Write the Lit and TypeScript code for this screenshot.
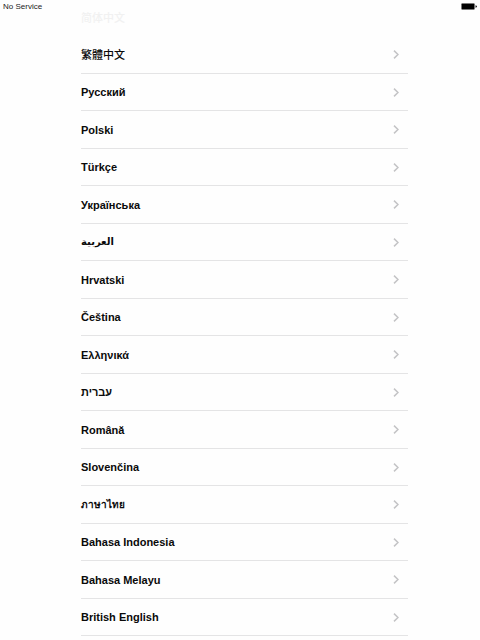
import { LitElement, html, css } from "lit";
import { customElement, property } from "lit/decorators.js";

interface Language {
  code: string;
  name: string;
}

const LANGUAGES: Language[] = [
  { code: "zh-Hant", name: "繁體中文" },
  { code: "ru", name: "Русский" },
  { code: "pl", name: "Polski" },
  { code: "tr", name: "Türkçe" },
  { code: "uk", name: "Українська" },
  { code: "ar", name: "العربية" },
  { code: "hr", name: "Hrvatski" },
  { code: "cs", name: "Čeština" },
  { code: "el", name: "Ελληνικά" },
  { code: "he", name: "עברית" },
  { code: "ro", name: "Română" },
  { code: "sk", name: "Slovenčina" },
  { code: "th", name: "ภาษาไทย" },
  { code: "id", name: "Bahasa Indonesia" },
  { code: "ms", name: "Bahasa Melayu" },
  { code: "en-GB", name: "British English" },
];

@customElement("status-bar")
export class StatusBar extends LitElement {
  static styles = css`
    :host {
      display: flex;
      align-items: center;
      justify-content: space-between;
      height: 13px;
      padding: 0 3px;
      font-size: 8px;
      line-height: 13px;
      color: #222;
    }
    .battery {
      display: block;
      width: 16px;
      height: 7px;
    }
  `;

  render() {
    return html`
      <span>No Service</span>
      <svg class="battery" viewBox="0 0 16 7" role="img" aria-label="Battery full">
        <rect x="0.5" y="0.5" width="13" height="6" rx="0.8" fill="#000" stroke="#777" stroke-width="0.6" />
        <path d="M14.5 2.2 Q16 2.4 16 3.5 Q16 4.6 14.5 4.8 Z" fill="#111" />
      </svg>
    `;
  }
}

@customElement("language-row")
export class LanguageRow extends LitElement {
  @property({ attribute: false }) language!: Language;

  static styles = css`
    :host {
      display: flex;
      height: 100%;
    }
    .row {
      flex: 1;
      display: flex;
      align-items: center;
      justify-content: space-between;
      margin: 0;
      padding: 0 9px 0 0;
      border: 0;
      background: none;
      color: #0a0a0a;
      font: inherit;
      text-align: left;
      cursor: pointer;
    }
    .name:lang(ar),
    .name:lang(th) {
      font-size: 10px;
    }
    .name:lang(zh) {
      font-weight: 500;
    }
    .chevron {
      display: block;
      width: 6px;
      height: 9px;
      fill: none;
      stroke: #c4c4c6;
      stroke-width: 1.5;
    }
  `;

  render() {
    return html`
      <button class="row" type="button">
        <span class="name" lang=${this.language.code}>${this.language.name}</span>
        <svg class="chevron" viewBox="0 0 6 9" aria-hidden="true">
          <path d="M1 0.6 L5 4.5 L1 8.4" />
        </svg>
      </button>
    `;
  }
}

@customElement("app-root")
export class AppRoot extends LitElement {
  static styles = css`
    :host {
      display: block;
      position: relative;
      min-height: 100vh;
      background: #fefefe;
      font-family: "Liberation Sans", "DejaVu Sans", "Noto Sans CJK TC", sans-serif;
    }
    .status {
      position: absolute;
      inset: 0 0 auto;
    }
    .picker {
      padding: 0 15%;
      font-size: 11px;
      font-weight: 700;
      line-height: 16px;
    }
    .scrolled {
      margin: 0 0 0 9px;
      font-family: "Liberation Sans", "Noto Sans CJK SC", sans-serif;
      font-weight: 500;
      line-height: 36px;
      color: #f1f1f1;
    }
    .list {
      margin: 0 0 0 9px;
      padding: 0;
      list-style: none;
    }
    .item {
      box-sizing: border-box;
      height: 38px;
      border-bottom: 1px solid #e4e4e5;
    }
    .item:nth-child(even) {
      height: 37px;
    }
  `;

  render() {
    return html`
      <status-bar class="status"></status-bar>
      <main class="picker">
        <p class="scrolled" lang="zh-Hans">简体中文</p>
        <ul class="list">
          ${LANGUAGES.map(
            (language) => html`<li class="item"><language-row .language=${language}></language-row></li>`,
          )}
        </ul>
      </main>
    `;
  }
}
